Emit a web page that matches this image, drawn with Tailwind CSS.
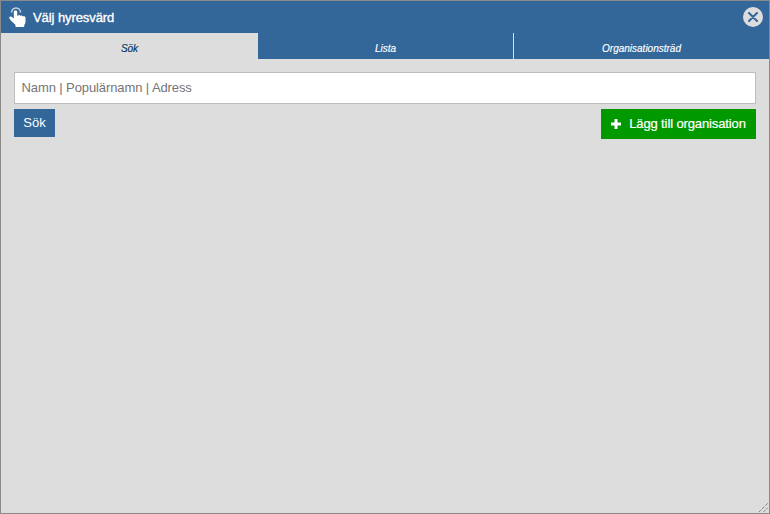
<!DOCTYPE html>
<html>
<head>
<meta charset="utf-8">
<script src="https://cdn.jsdelivr.net/npm/@tailwindcss/browser@4"></script>
</head>
<body class="font-['Liberation_Sans',Arial,sans-serif]">
<div class="relative w-[770px] h-[514px] border border-[#8a8a8a] bg-[#dddddd] flex flex-col overflow-hidden">
  <div class="h-[32px] bg-[#336699] flex items-center justify-between pl-[8px] pr-[6px] shrink-0">
    <div class="flex items-center gap-[7px]">
      <svg class="w-[17px] h-[20px]" viewBox="0 0 17 20" fill="#fff">
        <path d="M2.500 5.500a4.500 4.500 0 0 1 9 0" fill="none" stroke="#c8d6e6" stroke-width="1.500"/>
        <path d="M4.800 5c0-1.900 3.400-1.900 3.400 0v3.600l.9.1c.5-.9 2-.8 2.400.2.600-.7 2-.5 2.300.6.700-.4 2.700-.1 2.700 1.300v3.900c0 1.500-.7 2.600-1.300 3.300V20H6.500v-2C5 16.300 3 15 1.700 13.300L.4 11.500c-.8-1.300.9-2.700 2.100-1.700l2.300 1.800z"/>
      </svg>
      <span class="text-[13px] leading-none text-white tracking-[-0.08px] [-webkit-text-stroke:0.35px_white]">Välj hyresvärd</span>
    </div>
    <div class="w-[20px] h-[20px] rounded-full bg-[#dddddd] flex items-center justify-center">
      <svg class="w-[10px] h-[10px]" viewBox="0 0 10 10" stroke="#336699" stroke-width="2" stroke-linecap="round"><path d="M1 1l8 8M9 1l-8 8"/></svg>
    </div>
  </div>
  <div class="h-[26px] flex bg-[#336699] shrink-0 text-[10px] italic [-webkit-text-stroke:0.15px_currentColor]">
    <div class="w-[257px] bg-[#dddddd] text-[#003366] flex items-center justify-center pt-[4px]">Sök</div>
    <div class="w-[256px] border-r border-[#dddddd] text-white flex items-center justify-center pt-[4px]">Lista</div>
    <div class="flex-1 text-white flex items-center justify-center pt-[4px]">Organisationsträd</div>
  </div>
  <div class="px-[13px] pt-[13px] flex flex-col">
    <input type="text" placeholder="Namn | Populärnamn | Adress" class="w-full h-[32px] bg-white border border-[#bdbdbd] pl-[6.500px] pr-[7px] pb-[2px] text-[13px] tracking-[-0.1px] outline-none placeholder:text-[#757575]">
    <div class="flex justify-between items-start mt-[5px]">
      <button class="w-[41px] h-[28px] bg-[#336699] text-white text-[13px] pb-[1px] flex items-center justify-center">Sök</button>
      <button class="w-[155px] h-[30px] bg-[#009900] text-white text-[13px] tracking-[-0.12px] [-webkit-text-stroke:0.2px_white] flex items-center justify-center gap-[8px]">
        <svg class="w-[10px] h-[10px]" viewBox="0 0 10 10" fill="#fff"><path d="M3.500 0h3v3.500H10v3H6.500V10h-3V6.500H0v-3h3.500z"/></svg>
        <span>Lägg till organisation</span>
      </button>
    </div>
  </div>
  <svg class="absolute right-[1px] bottom-[1px] w-[9px] h-[9px]" viewBox="0 0 9 9" stroke="#555" stroke-width="1" stroke-dasharray="1 1" fill="none"><path d="M0 9L9 0M4.500 9L9 4.500"/></svg>
</div>
</body>
</html>
